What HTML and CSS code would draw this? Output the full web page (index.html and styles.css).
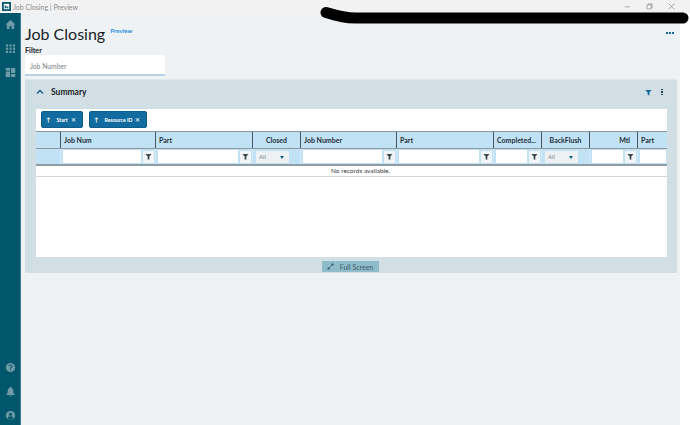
FILE: index.html
```html
<!DOCTYPE html>
<html lang="en">
<head>
<meta charset="utf-8">
<title>Job Closing | Preview</title>
<link rel="stylesheet" href="styles.css">
</head>
<body>
<div class="window">
  <header class="titlebar">
    <svg class="app-icon" viewBox="0 0 10 10"><rect width="10" height="10" fill="#0b5a70"/><rect x="2" y="2" width="6" height="6" fill="#fff"/><rect x="3" y="4" width="2" height="3" fill="#0b5a70"/><rect x="5.5" y="5" width="1.5" height="2" fill="#0b5a70"/></svg>
    <span class="window-title">Job Closing | Preview</span>
    <div class="window-controls">
      <svg viewBox="0 0 10 10"><path d="M1 5.5h7" stroke="#8a8a8a" fill="none"/></svg>
      <svg viewBox="0 0 10 10"><path d="M1.5 2.5h6v6h-6z M3 2.5v-1.2h5.7v5.7h-1.2" stroke="#8a8a8a" fill="none"/></svg>
      <svg viewBox="0 0 10 10"><path d="M1 1l8 8M9 1l-8 8" stroke="#8a8a8a" fill="none"/></svg>
    </div>
  </header>
  <div class="body-row">
    <nav class="sidebar">
      <div class="nav-group">
        <svg viewBox="0 0 12 12"><path d="M6 1L.6 6H2v5h3V7.6h2V11h3V6h1.400z" fill="#6f9ba9"/></svg>
        <svg viewBox="0 0 12 12"><g fill="#6f9ba9"><rect x="1" y="1.500" width="2.400" height="2.400"/><rect x="4.800" y="1.500" width="2.400" height="2.400"/><rect x="8.600" y="1.500" width="2.400" height="2.400"/><rect x="1" y="5" width="2.400" height="2.400"/><rect x="4.800" y="5" width="2.400" height="2.400"/><rect x="8.600" y="5" width="2.400" height="2.400"/><rect x="1" y="8.500" width="2.400" height="2.400"/><rect x="4.800" y="8.500" width="2.400" height="2.400"/><rect x="8.600" y="8.500" width="2.400" height="2.400"/></g></svg>
        <svg viewBox="0 0 12 12"><g fill="#6f9ba9"><rect x=".8" y="1" width="4.800" height="3"/><rect x="6.600" y="1" width="4.600" height="5.500"/><rect x=".8" y="5" width="4.800" height="6"/><rect x="6.600" y="7.500" width="4.600" height="3.500"/></g></svg>
      </div>
      <div class="nav-group nav-bottom">
        <svg viewBox="0 0 12 12"><circle cx="6" cy="6" r="5" fill="#6f9ba9"/><path d="M4.300 4.700a1.700 1.500 0 1 1 2.500 1.400c-.6.300-.8.600-.8 1.200" stroke="#0b5a70" stroke-width="1.200" fill="none"/><rect x="5.400" y="8" width="1.200" height="1.200" fill="#0b5a70"/></svg>
        <svg viewBox="0 0 12 12"><path d="M6 .8c.6 0 .9.400.9 1C8.400 2.300 9 3.600 9 5.200c0 2 .5 2.900 1.300 3.700v.8H1.700v-.8C2.500 8.100 3 7.200 3 5.200c0-1.600.6-2.900 2.100-3.400 0-.6.300-1 .9-1zM4.800 10.300h2.400a1.200 1.100 0 0 1-2.400 0z" fill="#6f9ba9"/></svg>
        <svg viewBox="0 0 12 12"><circle cx="6" cy="6" r="5" fill="#6f9ba9"/><circle cx="6" cy="4.700" r="1.800" fill="#0b5a70"/><path d="M2.800 9.200c.6-1.700 1.800-2.300 3.200-2.300s2.600.6 3.200 2.300A4 4 0 0 1 2.800 9.200z" fill="#0b5a70"/></svg>
      </div>
    </nav>
    <main class="content">
      <div class="page-head">
        <h1 class="page-title">Job Closing</h1>
        <span class="preview-tag">Preview</span>
        <span class="page-more"><i></i><i></i><i></i></span>
      </div>
      <div class="filter-label">Filter</div>
      <div class="filter-input">Job Number</div>
      <section class="panel">
        <div class="panel-head">
          <svg class="chevron" viewBox="0 0 8 6"><path d="M1 4.500L4 1.500l3 3" stroke="#0f5f85" stroke-width="1.300" fill="none"/></svg>
          <span class="panel-title">Summary</span>
          <svg class="panel-filter" viewBox="0 0 8 8"><path d="M.5 1h7L5 4v3.500L3 6.500V4z" fill="#0f6a9c"/></svg>
          <span class="panel-kebab"><i></i><i></i><i></i></span>
        </div>
        <div class="grid-card">
          <div class="chips">
            <div class="chip chip-start"><span class="arrow">↑</span><span>Start</span><span class="x">✕</span></div>
            <div class="chip chip-res"><span class="arrow">↑</span><span>Resource ID</span><span class="x">✕</span></div>
          </div>
          <div class="grid">
            <div class="cols head-row">
              <div class="hc"></div>
              <div class="hc">Job Num</div>
              <div class="hc">Part</div>
              <div class="hc center">Closed</div>
              <div class="hc">Job Number</div>
              <div class="hc">Part</div>
              <div class="hc">Completed...</div>
              <div class="hc center">BackFlush</div>
              <div class="hc right">Mtl</div>
              <div class="hc">Part</div>
            </div>
            <div class="cols filter-row">
              <div class="fc"></div>
              <div class="fc"><span class="fi"></span><span class="fb"><svg viewBox="0 0 8 8"><path d="M.5 1h7L5 4v3.500H3V4z" fill="#3b4a52"/></svg></span></div>
              <div class="fc"><span class="fi"></span><span class="fb"><svg viewBox="0 0 8 8"><path d="M.5 1h7L5 4v3.500H3V4z" fill="#3b4a52"/></svg></span></div>
              <div class="fc"><span class="fs">All<b></b></span></div>
              <div class="fc"><span class="fi"></span><span class="fb"><svg viewBox="0 0 8 8"><path d="M.5 1h7L5 4v3.500H3V4z" fill="#3b4a52"/></svg></span></div>
              <div class="fc"><span class="fi"></span><span class="fb"><svg viewBox="0 0 8 8"><path d="M.5 1h7L5 4v3.500H3V4z" fill="#3b4a52"/></svg></span></div>
              <div class="fc"><span class="fi"></span><span class="fb"><svg viewBox="0 0 8 8"><path d="M.5 1h7L5 4v3.500H3V4z" fill="#3b4a52"/></svg></span></div>
              <div class="fc"><span class="fs">All<b></b></span></div>
              <div class="fc"><span class="fi"></span><span class="fb"><svg viewBox="0 0 8 8"><path d="M.5 1h7L5 4v3.500H3V4z" fill="#3b4a52"/></svg></span></div>
              <div class="fc"><span class="fi"></span></div>
            </div>
            <div class="no-records">No records available.</div>
          </div>
        </div>
        <div class="panel-foot">
          <div class="fullscreen"><svg viewBox="0 0 10 10"><path d="M2 8l6-6" stroke="#33505c" stroke-width="1"/><rect x="6.500" y=".8" width="2.800" height="2.800" fill="#33505c"/><rect x=".8" y="6.500" width="2.800" height="2.800" fill="#33505c"/></svg><span>Full Screen</span></div>
        </div>
      </section>
    </main>
    <div class="margin-strip"></div>
  </div>
  <svg class="scribble" viewBox="0 0 690 30"><path d="M326 12.500C338 16 345 18 356 18L683 18" stroke="#000" stroke-width="11" stroke-linecap="round" fill="none"/></svg>
</div>
</body>
</html>
```
FILE: styles.css
```css
* { box-sizing: border-box; }
html, body { margin: 0; padding: 0; }
body { font-family: Lato, "Noto Sans", sans-serif; color: #1f2a30; overflow: hidden; }
.window { position: relative; width: 690px; height: 425px; display: flex; flex-direction: column; background: #fff; overflow: hidden; }

.titlebar { height: 13px; flex: none; display: flex; align-items: center; background: #f2f2f2; padding-left: 2px; }
.app-icon { width: 9px; height: 9px; margin-right: 2px; }
.window-title { font-size: 7px; color: #8a8a8a; }
.window-controls { margin-left: auto; display: flex; gap: 15px; padding-right: 15px; }
.window-controls svg { width: 7px; height: 7px; }

.body-row { flex: 1; display: flex; min-height: 0; }
.sidebar { width: 21px; flex: none; background: #00566b; border-right: 1px solid #2f7d92; display: flex; flex-direction: column; justify-content: space-between; padding: 6px 0 4px; }
.nav-group { display: flex; flex-direction: column; align-items: center; gap: 13px; }
.nav-group svg { width: 11px; height: 11px; }
.nav-bottom { gap: 13px; }

.content { flex: 1; min-width: 0; background: #eef2f5; padding: 0 3px 0 4px; }
.margin-strip { width: 10px; flex: none; background: #fff; }

.page-head { position: relative; display: flex; align-items: flex-start; height: 33px; padding-top: 11px; }
.page-title { margin: 0; font-size: 16px; font-weight: 400; line-height: 20px; color: #1a2227; }
.preview-tag { font-size: 6.200px; color: #2c8fe0; margin: 3px 0 0 5px; font-weight: 700; line-height: 8px; }
.page-more { position: absolute; right: 3px; top: 19px; display: flex; gap: 1px; }
.page-more i { width: 2px; height: 2px; background: #0f6a9c; }

.filter-label { font-size: 7.200px; font-weight: 700; line-height: 9px; color: #1a2227; }
.filter-input { width: 140px; height: 21px; background: #fff; border-bottom: 2px solid #b7d3e3; font-size: 6.800px; color: #7b8388; padding: 7px 0 0 5px; line-height: 9px; }

.panel { margin-top: 3px; height: 194px; background: #d1dfe4; border-top: 1px solid #dfe8ec; }
.panel-head { height: 29px; display: flex; align-items: center; padding: 0 14px 5px 11px; }
.chevron { width: 8px; height: 6px; }
.panel-title { margin-left: 7px; font-size: 8.500px; font-weight: 700; color: #1a2227; }
.panel-filter { width: 7px; height: 7px; margin-left: auto; }
.panel-kebab { margin-left: 9px; display: flex; flex-direction: column; gap: 1px; }
.panel-kebab i { width: 2px; height: 1.500px; background: #26414e; }

.grid-card { margin: 0 10px 0 11px; height: 148px; background: #fff; display: flex; flex-direction: column; overflow: hidden; }
.chips { height: 22px; flex: none; display: flex; gap: 6px; padding: 2px 0 0 5px; }
.chip { height: 17px; display: flex; align-items: center; background: #116b9f; border: 1px solid #0d5d8c; border-radius: 2px; color: #fff; font-size: 5.200px; font-weight: 700; padding: 0 6px 0 4px; }
.chip-start { width: 42px; }
.chip-res { width: 58px; }
.arrow { margin-right: 6px; font-size: 6px; }
.x { margin-left: auto; font-size: 6px; color: #d5e6f0; }

.grid { display: flex; flex-direction: column; }
.cols { display: grid; grid-template-columns: 24px 95px 97px 48px 96px 97px 48px 48px 48px 30px; }
.head-row { height: 18px; background: #c1e2f5; border-top: 1px solid #8b979d; border-bottom: 1px solid #8b979d; }
.hc { border-left: 1px solid #46545c; padding-left: 3px; font-size: 7px; font-weight: 700; line-height: 16px; color: #1f2f38; white-space: nowrap; overflow: hidden; }
.hc:first-child { border-left: 0; }
.center { text-align: center; padding-left: 0; }
.right { text-align: right; padding: 0 7px 0 0; }

.filter-row { height: 17px; background: #c1e2f5; border-bottom: 2px solid #8f9ca2; }
.fc { display: flex; align-items: center; padding: 0 1px 0 2px; gap: 2px; border-left: 1px solid #d6e8f2; min-width: 0; overflow: hidden; }
.fc:first-child { border-left: 0; }
.fi { flex: 1; height: 13px; min-width: 0; background: #fff; }
.fb { width: 11px; height: 12px; flex: none; background: #f2f5f7; display: flex; align-items: center; justify-content: center; }
.fb svg { width: 7px; height: 7px; }
.fs { position: relative; width: 33px; height: 12px; margin-left: 1px; background: #eef1f3; font-size: 6px; color: #7b8388; line-height: 12px; padding-left: 3px; }
.fs b { position: absolute; right: 5px; top: 5px; border: 2px solid transparent; border-top: 3px solid #0f5f85; border-bottom: 0; }

.no-records { height: 11px; padding-left: 18px; border-bottom: 1px solid #d4d8da; font-size: 6.500px; line-height: 10px; text-align: center; color: #3a3a3a; }

.panel-foot { display: flex; justify-content: center; height: 16px; padding: 4px 2px 0 0; }
.fullscreen { width: 57px; height: 11px; background: #8fbccb; display: flex; align-items: center; justify-content: center; gap: 6px; font-size: 7px; color: #3f5a66; }
.fullscreen svg { width: 7px; height: 7px; }

.scribble { position: absolute; left: 0; top: 0; width: 690px; height: 30px; }
```
